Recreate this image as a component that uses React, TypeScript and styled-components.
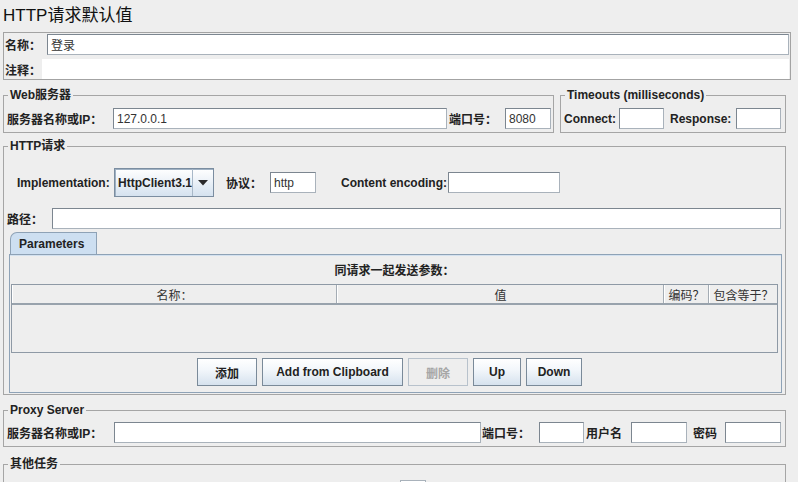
import styled, { createGlobalStyle } from "styled-components";

const GlobalStyle = createGlobalStyle`
  html, body {
    margin: 0;
    padding: 0;
    background: #eeeeee;
    overflow: hidden;
  }
  body {
    font-family: "Liberation Sans", "Noto Sans CJK SC", sans-serif;
    font-size: 12px;
    color: #222222;
  }
  #root {
    width: 798px;
    height: 482px;
    overflow: hidden;
  }
`;

const Page = styled.div`
  padding-left: 3px;
`;

const Title = styled.div`
  height: 32px;
  line-height: 32px;
  font-size: 17px;
  color: #111111;
`;

const NameBox = styled.div`
  margin-right: 7px;
  border: 1px solid #a3a3a3;
  padding: 1px 1px 0 1px;
  display: flex;
  flex-direction: column;
  gap: 4px;
`;

const Row = styled.div<{ $h?: number }>`
  display: flex;
  align-items: center;
  height: ${(p) => p.$h ?? 21}px;
`;

const Label = styled.span<{ $w?: number; $ml?: number }>`
  flex-shrink: 0;
  white-space: nowrap;
  font-weight: bold;
  width: ${(p) => (p.$w ? `${p.$w}px` : "auto")};
  margin-left: ${(p) => p.$ml ?? 0}px;
`;

const Field = styled.input<{ $w?: number; $h?: number; $ml?: number }>`
  box-sizing: border-box;
  flex: ${(p) => (p.$w ? "0 0 auto" : "1 1 auto")};
  width: ${(p) => (p.$w ? `${p.$w}px` : "auto")};
  min-width: 0;
  height: ${(p) => p.$h ?? 21}px;
  margin: 0 0 0 ${(p) => p.$ml ?? 0}px;
  padding: 0 3px;
  font: inherit;
  font-weight: normal;
  color: #333333;
  background: #ffffff;
  border: 1px solid #a9b2bb;
  border-top-color: #7c8690;
  border-left-color: #7c8690;
  outline: none;
`;

const PlainField = styled.div`
  flex: 1;
  height: 20px;
  background: #ffffff;
`;

const GroupRow = styled.div`
  display: flex;
  gap: 6px;
  margin: 7px 12px 0 0;
`;

const Group = styled.fieldset<{ $w?: number; $mt?: number; $pad: string }>`
  box-sizing: border-box;
  flex: ${(p) => (p.$w ? "0 0 auto" : "1 1 auto")};
  width: ${(p) => (p.$w ? `${p.$w}px` : "auto")};
  min-width: 0;
  margin: ${(p) => p.$mt ?? 0}px 0 0 0;
  padding: ${(p) => p.$pad};
  border: 1px solid #a5a5a5;
`;

const Legend = styled.legend`
  padding: 0 2px;
  margin-left: 1px;
  font-weight: bold;
  line-height: 16px;
  color: #222222;
`;

const Section = styled.div`
  margin-right: 12px;
`;

const ImplRow = styled(Row)`
  padding-left: 10px;
`;

const Combo = styled.div`
  box-sizing: border-box;
  display: flex;
  width: 100px;
  height: 29px;
  border: 1px solid #7b8da0;
  box-shadow: inset 1px 1px 0 #9fb1c3;
  background: linear-gradient(#ffffff, #d5e2ef);
`;

const ComboText = styled.span`
  flex: 1;
  display: flex;
  align-items: center;
  padding-left: 3px;
  font-weight: bold;
`;

const ComboArrow = styled.span`
  width: 20px;
  display: flex;
  align-items: center;
  justify-content: center;
  border-left: 1px solid #a8b8c8;
`;

const PathRow = styled(Row)`
  margin-top: 11px;
  padding-right: 1px;
`;

const Tabs = styled.div`
  margin: 3px 0 0 2px;
`;

const TabStrip = styled.div`
  display: flex;
  height: 22px;
  padding-left: 1px;
`;

const Tab = styled.div`
  box-sizing: border-box;
  width: 87px;
  height: 22px;
  padding-left: 8px;
  display: flex;
  align-items: center;
  font-weight: bold;
  color: #222222;
  background: #cddff1;
  border: 1px solid #8ea2b6;
  border-bottom: none;
  border-top-left-radius: 7px;
`;

const TabPanel = styled.div`
  border: 1px solid #8ea2b6;
  box-shadow: inset 0 1px 0 #d3e1ef;
  padding: 0 3px 6px 1px;
`;

const Caption = styled.div`
  height: 26px;
  padding-top: 3px;
  line-height: 26px;
  text-align: center;
  font-weight: bold;
`;

const Table = styled.div`
  border: 1px solid #8e99a5;
`;

const HeaderRow = styled.div`
  display: grid;
  grid-template-columns: 325px 327px 45px 1fr;
  height: 18px;
  border-bottom: 2px solid #98a2ac;
`;

const HeaderCell = styled.div`
  display: flex;
  align-items: center;
  justify-content: center;
  border-right: 1px solid #a4acb4;
  border-left: 1px solid #ffffff;
  color: #333333;
  white-space: nowrap;
  &:last-child {
    border-right: none;
  }
`;

const TableBody = styled.div`
  height: 47px;
`;

const ButtonBar = styled.div`
  display: flex;
  justify-content: center;
  gap: 5px;
  margin-top: 5px;
  padding-right: 10px;
`;

const Button = styled.button<{ $w: number }>`
  box-sizing: border-box;
  width: ${(p) => p.$w}px;
  height: 28px;
  padding: 0;
  font: inherit;
  font-weight: bold;
  color: #222222;
  border: 1px solid #7a8a99;
  background: linear-gradient(#ffffff 0%, #f3f7fb 40%, #d6e2ee 100%);

  &:disabled {
    color: #a6a6a6;
    border-color: #b8c2cc;
    background: #eeeeee;
  }
`;

const SmallBox = styled.div`
  width: 26px;
  height: 20px;
  margin-left: 393px;
  background: #ffffff;
  border: 1px solid #a9b2bb;
  box-sizing: border-box;
`;

const paramColumns = ["名称：", "值", "编码？", "包含等于？"];

export default function App() {
  return (
    <Page>
      <GlobalStyle />
      <Title>HTTP请求默认值</Title>

      <NameBox>
        <Row>
          <Label $w={42}>名称：</Label>
          <Field readOnly defaultValue="登录" />
        </Row>
        <Row $h={20}>
          <Label $w={37}>注释：</Label>
          <PlainField />
        </Row>
      </NameBox>

      <GroupRow>
        <Group $pad="5px 2px 3px 3px">
          <Legend>Web服务器</Legend>
          <Row>
            <Label $w={106}>服务器名称或IP：</Label>
            <Field readOnly defaultValue="127.0.0.1" />
            <Label $w={56} $ml={2}>
              端口号：
            </Label>
            <Field readOnly $w={46} defaultValue="8080" />
          </Row>
        </Group>
        <Group $w={226} $pad="5px 4px 3px 3px">
          <Legend>Timeouts (milliseconds)</Legend>
          <Row>
            <Label $w={55}>Connect:</Label>
            <Field readOnly $w={45} />
            <Label $w={66} $ml={6}>
              Response:
            </Label>
            <Field readOnly $w={45} />
          </Row>
        </Group>
      </GroupRow>

      <Section>
        <Group $mt={5} $pad="14px 3px 1px 3px">
          <Legend>HTTP请求</Legend>
          <ImplRow $h={29}>
            <Label $w={97}>Implementation:</Label>
            <Combo>
              <ComboText>HttpClient3.1</ComboText>
              <ComboArrow>
                <svg width="10" height="6" viewBox="0 0 10 6">
                  <path d="M0 0 L10 0 L5 5.5 Z" fill="#2a2a2a" />
                </svg>
              </ComboArrow>
            </Combo>
            <Label $w={44} $ml={12}>
              协议：
            </Label>
            <Field readOnly $w={46} defaultValue="http" />
            <Label $w={107} $ml={25}>
              Content encoding:
            </Label>
            <Field readOnly $w={112} />
          </ImplRow>
          <PathRow>
            <Label $w={45}>路径：</Label>
            <Field readOnly />
          </PathRow>
          <Tabs>
            <TabStrip>
              <Tab>Parameters</Tab>
            </TabStrip>
            <TabPanel>
              <Caption>同请求一起发送参数：</Caption>
              <Table>
                <HeaderRow>
                  {paramColumns.map((c) => (
                    <HeaderCell key={c}>{c}</HeaderCell>
                  ))}
                </HeaderRow>
                <TableBody />
              </Table>
              <ButtonBar>
                <Button $w={60}>添加</Button>
                <Button $w={141}>Add from Clipboard</Button>
                <Button $w={60} disabled>
                  删除
                </Button>
                <Button $w={48}>Up</Button>
                <Button $w={56}>Down</Button>
              </ButtonBar>
            </TabPanel>
          </Tabs>
        </Group>

        <Group $mt={7} $pad="4px 4px 3px 3px">
          <Legend>Proxy Server</Legend>
          <Row>
            <Label $w={107}>服务器名称或IP：</Label>
            <Field readOnly />
            <Label $w={57} $ml={1}>
              端口号：
            </Label>
            <Field readOnly $w={45} />
            <Label $w={45} $ml={2}>
              用户名
            </Label>
            <Field readOnly $w={56} />
            <Label $w={32} $ml={6}>
              密码
            </Label>
            <Field readOnly $w={56} />
          </Row>
        </Group>

        <Group $mt={9} $pad="8px 4px 3px 3px">
          <Legend>其他任务</Legend>
          <SmallBox />
        </Group>
      </Section>
    </Page>
  );
}
